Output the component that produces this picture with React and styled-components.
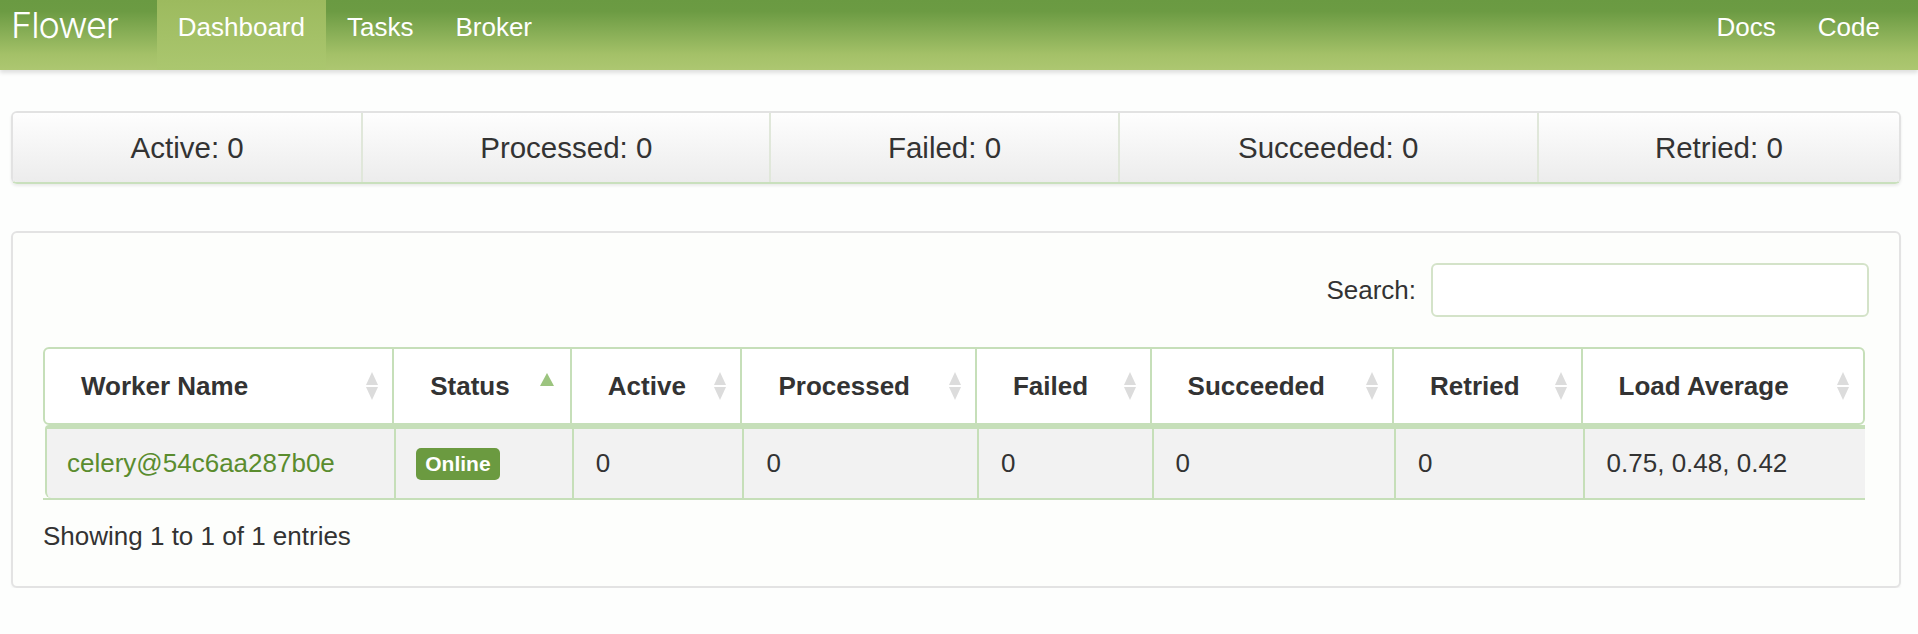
import React from "react";
import styled, { createGlobalStyle } from "styled-components";

const GlobalStyle = createGlobalStyle`
  body {
    margin: 0;
    background: #fdfefd;
    font-family: "Liberation Sans", Arial, sans-serif;
    color: #333;
  }
`;

const Navbar = styled.header`
  height: 70px;
  background: linear-gradient(
    to bottom,
    #6a9a42 0%,
    #6c9b43 16%,
    #86ad55 45%,
    #a4c168 78%,
    #adc771 100%
  );
  box-shadow: 0 3px 4px rgba(0, 0, 0, 0.12);
`;

const NavInner = styled.div`
  display: flex;
  height: 100%;
  margin: 0 17px 0 11px;
`;

const Brand = styled.a`
  font-family: Inter, "Liberation Sans", sans-serif;
  font-weight: 300;
  font-size: 36px;
  letter-spacing: -1px;
  line-height: 44px;
  padding-top: 3px;
  color: #fff;
  margin-right: 39px;
  text-decoration: none;
`;

const NavList = styled.nav`
  display: flex;
  height: 100%;
`;

const Spacer = styled.div`
  flex: 1;
`;

const NavLink = styled.a`
  display: block;
  height: 100%;
  box-sizing: border-box;
  padding: 10px 21px 0;
  font-size: 26px;
  line-height: 34px;
  color: #fff;
  text-decoration: none;
  background: ${(p) =>
    p.$active ? "linear-gradient(to bottom, #9cba5e, #abc76f)" : "transparent"};
`;

const Page = styled.main`
  margin: 0 17px 0 11px;
  padding-top: 41px;
`;

const StatsBar = styled.div`
  display: grid;
  grid-template-columns: 349fr 409fr 349fr 420fr 363fr;
  height: 73px;
  box-sizing: border-box;
  border: 2px solid #e2e2e2;
  border-bottom: 2px solid #c9e0bd;
  border-radius: 6px;
  overflow: hidden;
  box-shadow: 0 2px 3px rgba(0, 0, 0, 0.08);
`;

const Stat = styled.div`
  display: flex;
  align-items: center;
  justify-content: center;
  font-size: 29.5px;
  color: #333;
  background: linear-gradient(to bottom, #fefefe, #ececec);
  border-left: 2px solid #e0e7da;
  &:first-child {
    border-left: none;
  }
`;

const Panel = styled.section`
  margin-top: 47px;
  height: 357px;
  box-sizing: border-box;
  border: 2px solid #e3e3e3;
  border-radius: 6px;
  padding: 30px 30px 0 30px;
  background: #fdfefc;
  box-shadow: 0 2px 2px rgba(0, 0, 0, 0.04);
`;

const SearchRow = styled.div`
  display: flex;
  justify-content: flex-end;
  align-items: center;
  gap: 15px;
`;

const SearchLabel = styled.label`
  font-size: 26px;
  color: #333;
`;

const SearchInput = styled.input`
  width: 438px;
  height: 54px;
  box-sizing: border-box;
  border: 2px solid #d4e3c9;
  border-radius: 6px;
  background: #fff;
  font-size: 24px;
  padding: 0 12px;
  &:focus {
    outline: none;
  }
`;

const cols = "348fr 178fr 171fr 235fr 175fr 243fr 189fr 283fr";

const Table = styled.div`
  margin: 30px 4px 0 0;
`;

const HeadRow = styled.div`
  display: grid;
  grid-template-columns: ${cols};
  height: 78px;
  box-sizing: border-box;
  border: 2px solid #c6dfb9;
  border-radius: 6px;
  background: #fff;
`;

const HeadCell = styled.div`
  display: flex;
  align-items: center;
  justify-content: space-between;
  padding: 0 13px 0 36px;
  font-size: 26px;
  font-weight: bold;
  color: #333;
  border-left: 2px solid #c6dfb9;
  &:first-child {
    border-left: none;
  }
`;

const SortMark = styled.span`
  display: flex;
  align-self: ${(p) => (p.$asc ? "flex-start" : "center")};
  margin-top: ${(p) => (p.$asc ? "24px" : "0")};
  margin-right: ${(p) => (p.$asc ? "3px" : "0")};
`;

const Body = styled.div`
  border-bottom: 2px solid #c6dfb9;
`;

const BodyRow = styled.div`
  display: grid;
  grid-template-columns: ${cols};
  margin-left: 2px;
  height: 73px;
  box-sizing: border-box;
  border-left: 2px solid #c6dfb9;
  border-top: 4px solid #c6dfb9;
  border-radius: 4px 0 0 6px;
  background: #f2f2f2;
`;

const Cell = styled.div`
  display: flex;
  align-items: center;
  padding-left: 22px;
  font-size: 26px;
  color: #333;
  border-left: 2px solid #c6dfb9;
  &:first-child {
    border-left: none;
    padding-left: 20px;
  }
`;

const WorkerLink = styled.a`
  color: #5a8c2e;
  text-decoration: none;
`;

const Badge = styled.span`
  display: inline-block;
  background: #6b9a40;
  color: #fff;
  font-weight: bold;
  font-size: 21px;
  line-height: 32px;
  padding: 0 9px;
  border-radius: 5px;
  margin-left: -2px;
`;

const Info = styled.div`
  margin-top: 20px;
  font-size: 26px;
  line-height: 32px;
  color: #333;
`;

function SortIcon({ asc }) {
  if (asc) {
    return (
      <SortMark $asc>
        <svg width="14" height="13" viewBox="0 0 14 13">
          <path d="M7 0 L14 13 L0 13 Z" fill="#9cc47f" />
        </svg>
      </SortMark>
    );
  }
  return (
    <SortMark>
      <svg width="14" height="30" viewBox="0 0 14 30">
        <path d="M7 1 L13 14 L1 14 Z" fill="#dcdcdc" />
        <path d="M1 16 L13 16 L7 29 Z" fill="#dcdcdc" />
      </svg>
    </SortMark>
  );
}

const stats = [
  ["Active", 0],
  ["Processed", 0],
  ["Failed", 0],
  ["Succeeded", 0],
  ["Retried", 0],
];

const headers = [
  "Worker Name",
  "Status",
  "Active",
  "Processed",
  "Failed",
  "Succeeded",
  "Retried",
  "Load Average",
];

function App() {
  return (
    <>
      <GlobalStyle />
      <Navbar>
        <NavInner>
          <Brand href="#">Flower</Brand>
          <NavList>
            <NavLink href="#" $active>
              Dashboard
            </NavLink>
            <NavLink href="#">Tasks</NavLink>
            <NavLink href="#">Broker</NavLink>
          </NavList>
          <Spacer />
          <NavList>
            <NavLink href="#">Docs</NavLink>
            <NavLink href="#">Code</NavLink>
          </NavList>
        </NavInner>
      </Navbar>
      <Page>
        <StatsBar>
          {stats.map(([label, n]) => (
            <Stat key={label}>
              {label}: {n}
            </Stat>
          ))}
        </StatsBar>
        <Panel>
          <SearchRow>
            <SearchLabel>Search:</SearchLabel>
            <SearchInput type="text" />
          </SearchRow>
          <Table>
            <HeadRow>
              {headers.map((h) => (
                <HeadCell key={h}>
                  {h}
                  <SortIcon asc={h === "Status"} />
                </HeadCell>
              ))}
            </HeadRow>
            <Body>
              <BodyRow>
                <Cell>
                  <WorkerLink href="#">celery@54c6aa287b0e</WorkerLink>
                </Cell>
                <Cell>
                  <Badge>Online</Badge>
                </Cell>
                <Cell>0</Cell>
                <Cell>0</Cell>
                <Cell>0</Cell>
                <Cell>0</Cell>
                <Cell>0</Cell>
                <Cell>0.75, 0.48, 0.42</Cell>
              </BodyRow>
            </Body>
          </Table>
          <Info>Showing 1 to 1 of 1 entries</Info>
        </Panel>
      </Page>
    </>
  );
}

export default App;
